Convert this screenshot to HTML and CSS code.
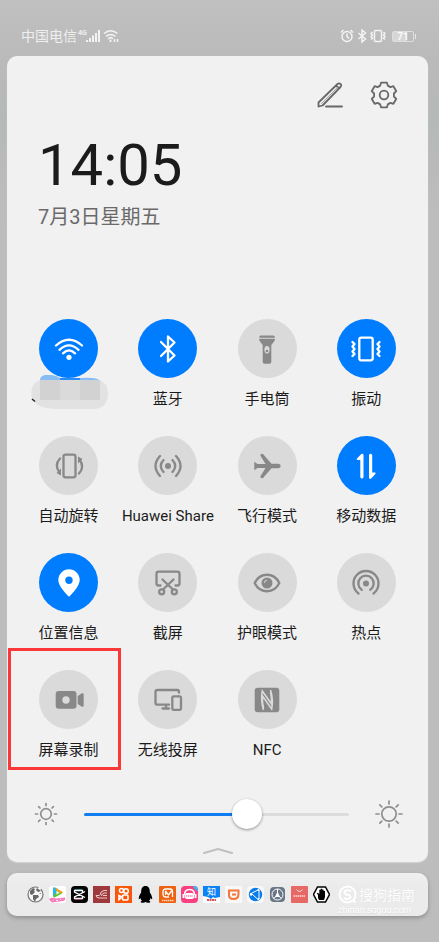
FILE: index.html
```html
<!DOCTYPE html>
<html lang="zh-CN">
<head>
    <meta charset="UTF-8">
    <meta name="viewport" content="width=device-width, initial-scale=1.0">
    <title>控制中心</title>
    <link rel="stylesheet" href="styles.css">
</head>
<body>
    <div class="status-bar">
        <div class="status-left">
            <span class="carrier">中国电信</span>
            <span class="network">4G</span>
            <svg class="signal" width="14" height="14" viewBox="0 0 14 14"><path d="M1 11v2M4 9v4M7 6.500v6.500M10 4v9M13 1v12"/></svg>
            <svg class="status-wifi" width="16" height="14" viewBox="0 0 16 14">
                <path d="M1 4.500Q7.500-1 14.500 4.500M3 7.500Q7.500 3.500 12.500 7.500M5 10Q7.500 7.500 10 9.500"/>
                <path d="M7.500 10.500v2.500M6.500 12h2M11.500 10v3M14.500 10v3"/>
            </svg>
        </div>
        <div class="status-right">
            <svg width="14" height="14" viewBox="0 0 14 14"><circle cx="7" cy="7.500" r="5"/><path d="M7 4.500v3l2 2M1 3.500L3.500 1M13 3.500L10.500 1"/></svg>
            <svg width="10" height="14" viewBox="0 0 10 14"><path d="M1.500 4l7 6L5 13V1l3.500 3-7 6"/></svg>
            <svg width="16" height="14" viewBox="0 0 16 14"><rect x="4.500" y="1.500" width="7" height="11" rx="1"/><path d="M2.500 3l-1.500 1.500 1.500 1.500L1 7.500 2.500 9 1 10.500M13.500 3l1.500 1.500L13.500 6 15 7.500 13.500 9l1.500 1.500"/></svg>
            <span class="battery">71</span>
        </div>
    </div>

    <main class="panel">
        <div class="actions">
            <button class="icon-btn" aria-label="编辑">
                <svg width="28" height="28" viewBox="-14 -14 28 28"><path d="M-11.500 11.500v-4L7.500-11q1.500-1.200 3 0t0 3L-7.500 10.500l-4 1M6-9.500l3.200 3M-4 11.500h16"/><path d="M-8.500 8.500L8.500-8.500" class="thin"/></svg>
            </button>
            <button class="icon-btn" aria-label="设置">
                <svg width="28" height="28" viewBox="-14 -14 28 28"><path d="M-2.900-12.400H2.900L3.800-9.400 6.400-7.900 9.400-8.800 12.300-3.800 9.900-1.500V1.500L12.300 3.800 9.400 8.800 6.400 7.900 3.800 9.400 2.900 12.400H-2.900L-3.800 9.400-6.400 7.900-9.400 8.800-12.300 3.800-9.900 1.500V-1.500L-12.300-3.800-9.400-8.800-6.400-7.900-3.800-9.400z"/><circle r="4.300"/></svg>
            </button>
        </div>

        <div class="clock">
            <h1 class="time">14:05</h1>
            <p class="date">7月3日星期五</p>
        </div>

        <div class="tiles">
            <button class="tile on" aria-label="WLAN">
                <span class="circle">
                    <svg viewBox="-15 -15 30 30" class="line"><path d="M-13-3.500Q0-15 13-3.500M-9.500 .8Q0-8 9.500 .8M-6 4.300Q0-1.500 6 4.300"/><circle class="solid" cy="8.300" r="2.600"/></svg>
                </span>
                <span class="label"></span>
                <svg class="smudge" width="78" height="36" viewBox="0 0 78 36">
                    <path fill="#86bdf4" d="M9 5Q9 1 14 0Q23-1 29 3H50Q64 2 68 5z"/>
                    <path fill="#268cfa" d="M29 3h20v2H29z"/>
                    <path fill="#e2e2e2" d="M9 5H68Q77 8 77 18Q77 34 62 34H24Q4 33 1 23Q-2 9 9 5z"/>
                    <path fill="#d2d2d2" d="M9 5h20v20H9zM49 5h20v20H49z"/>
                    <path fill="#dadada" d="M29 5h20v20H29z"/>
                    <path stroke="#222" stroke-width="1.500" d="M1 24l3 2.500"/>
                </svg>
            </button>
            <button class="tile on">
                <span class="circle">
                    <svg viewBox="-15 -15 30 30" class="line"><path d="M-7-7L6.500 6.500 0 12.500V-12.500L6.500-6.500-7 7"/></svg>
                </span>
                <span class="label">蓝牙</span>
            </button>
            <button class="tile">
                <span class="circle">
                    <svg viewBox="-15 -15 30 30"><path d="M-7.700-11.300v-.7q0-1.500 1.500-1.500H6.300q1.500 0 1.500 1.500v.7zM-7.700-10.300H7.800V-8.500L4.300-4V13q0 1.700-1.700 1.700H-2.600Q-4.300 14.700-4.300 13V-4L-7.700-8.500z"/><ellipse class="hole" cy=".7" rx="2.600" ry="3.700"/><circle cy="2" r="1.300"/></svg>
                </span>
                <span class="label">手电筒</span>
            </button>
            <button class="tile on">
                <span class="circle">
                    <svg viewBox="-15 -15 30 30" class="line"><rect x="-6.700" y="-11.300" width="13.400" height="22.600" rx="2"/><path d="M-13.500-7L-11.500-5-13.500-2.500-11.500 0-13.500 2.500-11.500 5-13.500 7M13.500-7L11.500-5 13.500-2.500 11.500 0 13.500 2.500 11.500 5 13.500 7"/></svg>
                </span>
                <span class="label">振动</span>
            </button>

            <button class="tile">
                <span class="circle">
                    <svg viewBox="-15 -15 30 30" class="line"><rect x="-5.500" y="-11.300" width="12" height="22.600" rx="2"/><path d="M-9-7.500Q-15-1-9.500 6.500M10 7.500Q16 1 10.500-6.500"/><path class="solid" d="M-8 2.500V9.500L-12.500 7zM9-2.500V-9.500L13.500-7z"/></svg>
                </span>
                <span class="label">自动旋转</span>
            </button>
            <button class="tile">
                <span class="circle">
                    <svg viewBox="-15 -15 30 30" class="line"><circle class="solid" r="3"/><path d="M-4.500-6Q-10 0-4.500 6M4.500-6Q10 0 4.500 6M-8-10Q-17 0-8 10M8-10Q17 0 8 10"/></svg>
                </span>
                <span class="label">Huawei Share</span>
            </button>
            <button class="tile">
                <span class="circle">
                    <svg viewBox="-15 -15 30 30"><path d="M-12.700-4.300L-9.500-2H-1.500L-6.700-10.500Q-6.500-13-4-12L4.500-2.200H11.500Q13.700-1.800 13.700 0T11.500 2.200H4.500L-4 12Q-6.500 13-6.700 10.500L-1.500 2H-9.500L-12.700 4.300z"/></svg>
                </span>
                <span class="label">飞行模式</span>
            </button>
            <button class="tile on">
                <span class="circle">
                    <svg viewBox="-15 -15 30 30"><path d="M-5.700 11.300V-6H-8.500Q-10-6.200-9-7.500L-4.700-12Q-2.700-13-2.500-11V11.300Q-4 14-5.700 11.300zM3-11V11.500Q3.200 13.800 5.200 12.500L9.300 8Q10.300 6.700 9 6.500H6.200V-11Q4.500-13.500 3-11z"/></svg>
                </span>
                <span class="label">移动数据</span>
            </button>

            <button class="tile on">
                <span class="circle">
                    <svg viewBox="-15 -15 30 30"><path d="M0 13.700C-3 11-10.700 3-10.700-3A10.700 10.700 0 0 1 10.700-3C10.700 3 3 11 0 13.700z"/><circle class="hole" cy="-2.700" r="3.700"/></svg>
                </span>
                <span class="label">位置信息</span>
            </button>
            <button class="tile">
                <span class="circle">
                    <svg viewBox="-15 -15 30 30" class="line"><path d="M-7.500 2.500h-2q-2 0-2-2V-9.300q0-2 2-2h19q2 0 2 2V.5q0 2-2 2h-2M-5.500-3.500L5 6.500M5.500-3.500L-5 6.500"/><circle cx="-6.300" cy="8.800" r="2.500"/><circle cx="6.300" cy="8.800" r="2.500"/></svg>
                </span>
                <span class="label">截屏</span>
            </button>
            <button class="tile">
                <span class="circle">
                    <svg viewBox="-15 -15 30 30" class="line"><path d="M-12.300 0C-7-11 7-11 12.300 0C7 11-7 11-12.300 0z"/><circle class="solid" r="5.500"/><path class="glint" d="M-2.700-.5Q-2.500-2.700-.3-3"/></svg>
                </span>
                <span class="label">护眼模式</span>
            </button>
            <button class="tile">
                <span class="circle">
                    <svg viewBox="-15 -15 30 30" class="line"><circle class="solid" cy=".5" r="3"/><path d="M-4.300 6.800A7.700 7.700 0 1 1 4.300 6.800M-7.500 10.500A12.500 12.500 0 1 1 7.500 10.500"/></svg>
                </span>
                <span class="label">热点</span>
            </button>

            <button class="tile marked">
                <span class="circle">
                    <svg viewBox="-15 -15 30 30"><rect x="-13.300" y="-9" width="20.800" height="17.700" rx="3"/><circle class="hole" cx="-3" r="3.700"/><path d="M8.700-4L13-6.700Q14.700-7 14.700-5.500V5.500Q14.700 7 13 6.700L8.700 4z"/></svg>
                </span>
                <span class="label">屏幕录制</span>
            </button>
            <button class="tile">
                <span class="circle">
                    <svg viewBox="-15 -15 30 30" class="line"><path d="M1 4.700H-10.500q-2 0-2-2V-8q0-2 2-2H9q2 0 2 2v.7M-5.500 8.500H1M-2 5v3"/><rect x="4.300" y="-3.700" width="8.700" height="13.500" rx="1.500"/></svg>
                </span>
                <span class="label">无线投屏</span>
            </button>
            <button class="tile">
                <span class="circle">
                    <svg viewBox="-15 -15 30 30"><rect x="-12.300" y="-12.300" width="24.600" height="24.600" rx="3"/><path class="nfc" d="M-3.500 10Q-6.500 0-4.700-9L4.500 4Q5-2 3.500-8M3.500-10Q6.500 0 4.700 9L-4.500-4Q-5 2-3.500 8"/></svg>
                </span>
                <span class="label">NFC</span>
            </button>
        </div>

        <div class="brightness">
            <svg width="24" height="24" viewBox="-12 -12 24 24"><circle r="5.300"/><path d="M0-10.500v2M0 8.500v2M-10.500 0h2M8.500 0h2M-7.400-7.400l1.400 1.400M6 6l1.400 1.400M-7.400 7.400l1.400-1.400M6-6l1.400-1.400"/></svg>
            <input class="slider" type="range" min="0" max="100" value="63" aria-label="亮度">
            <svg width="28" height="28" viewBox="-14 -14 28 28"><circle r="7.200"/><path d="M0-13v3M0 10v3M-13 0h3M10 0h3M-9.200-9.200l2 2M7.200 7.200l2 2M-9.200 9.200l2-2M7.200-7.200l2-2"/></svg>
        </div>

        <button class="collapse" aria-label="收起">
            <svg width="30" height="6" viewBox="0 0 30 6"><path d="M1 5L15 1l14 4"/></svg>
        </button>
    </main>

    <footer class="dock">
        <div class="apps">
            <svg viewBox="0 0 17 17"><circle cx="8.500" cy="8.500" r="7.500" fill="#f5f5f5" stroke="#777" stroke-width="1.200" stroke-dasharray="38 3"/><path fill="#666" d="M3 5l3-3 2 1-1 2 1 1-3 3-2-1zM10 2l4 3-3 1-2-2zM6 9l5 0 1 2-3 2-1 3-2-3zM12 7l2 0 0 1z"/></svg>
            <svg viewBox="0 0 17 17"><rect width="17" height="17" rx="3" fill="#fff"/><path fill="#22b8f0" d="M4 2.500Q4 .5 6 1.500L9 3 6 11Q4 11.500 4 9.500z"/><path fill="#ff9b1a" d="M6 1.500L13 5.500Q14.500 6.500 13 7.500L9 8z"/><path fill="#62c62e" d="M13 7.500L6 11.300Q4.500 11.800 4.200 10.500L8 5z"/><path fill="#fff" d="M7.500 5l3 1.800-3 1.700z"/><path fill="#f77dbb" d="M0 13Q3 11 7 12.500L16 11.500Q17 14 14 15L3 16.500Q1 15.500 0 13z"/><path stroke="#fff" stroke-width=".8" d="M4 14.500l1-1M7 14.500h2M11 14l1-1"/></svg>
            <svg viewBox="0 0 17 17"><rect width="17" height="17" rx="4" fill="#050505"/><g fill="none" stroke="#fff" stroke-width="1.300"><path d="M11.500 6.500V4.500h-8V6L14 11.500M11.500 10.500v2h-8V11L14 5.500"/></g><path stroke="#ef4f78" stroke-width=".6" d="M4 13.400h7"/><path stroke="#4bdbe3" stroke-width=".6" d="M4 3.600h7"/></svg>
            <svg viewBox="0 0 17 17"><path fill="#9f383a" d="M0 0h17v17H0z"/><g fill="none" stroke="#f4dcdc" stroke-width=".9"><path d="M14 4.500H11Q7.500 5 7 9M14 7H11Q8.500 7.500 8.500 10M14 9.500H10M14 12H6Q3.500 12 3 9.500M3 9.500h3.500"/></g></svg>
            <svg viewBox="0 0 17 17"><path fill="#fb5509" d="M0 0h17v17H0z"/><g fill="none" stroke="#fff" stroke-width="1.600"><circle cx="6.500" cy="4.500" r="2"/><circle cx="11" cy="5" r="2.300"/><rect x="7.500" y="9" width="5.500" height="5" rx="1"/><path d="M7 11L4 9.500v4z"/></g></svg>
            <svg viewBox="0 0 17 17"><path d="M8.500 0C12 0 13 3 12.800 6.500C14 8 15.500 11 15.200 13Q14.500 13.500 13.500 12Q13.300 14 12 14.700Q14 15.500 13 16.500Q10 17.300 8.500 16Q7 17.300 4 16.500Q3 15.500 5 14.700Q3.700 14 3.500 12Q2.500 13.500 1.800 13C1.500 11 3 8 4.200 6.500C4 3 5 0 8.500 0z"/></svg>
            <svg viewBox="0 0 17 17"><rect width="17" height="17" rx="1" fill="#ed6311"/><path fill="none" stroke="#fff" stroke-width="1.300" d="M10 11H7Q4 11 4 8V6Q4 3 7 3h4q2.500 0 2.500 2.500V11M6.500 5v4M6.500 5l3 4 3-4"/><path stroke="#ffd7bd" stroke-width="1.300" stroke-dasharray="1.500 .5" d="M3 14.500h11.500"/></svg>
            <svg viewBox="0 0 17 17"><rect width="17" height="17" rx="4" fill="#fa3f82"/><path fill="#39b9e8" d="M12 0h1Q17 0 17 4v1Q13 4 12 0z"/><path fill="none" stroke="#fff" stroke-width="1.500" d="M3.500 9Q3.500 3.500 8.500 3.500T13.500 9"/><rect x="4" y="7" width="9" height="6" rx="2" fill="#fff"/><path stroke="#fff" stroke-width="2" d="M2.500 8v4M14.500 8v4"/><path stroke="#fa3f82" stroke-dasharray="1.200 .6" d="M5 10h7"/></svg>
            <svg viewBox="0 0 17 17"><path fill="#fff" d="M0 0h17v17H0z"/><path fill="#0b82f5" d="M0 0h17v11l-5 1-2-1-2 2-3-2-5-1z"/><text class="zhi" x="4" y="9">知</text><path stroke="#d45555" stroke-width="1.800" stroke-dasharray="2 .5" d="M4 14h9"/></svg>
            <svg viewBox="0 0 17 17"><path fill="#f8f8f8" d="M0 0h17v17H0z"/><path fill="none" stroke="#f87538" stroke-width="2" d="M4 4.500h9.500V8q0 5-5 5T4 8zM7 8.500h4"/></svg>
            <svg viewBox="0 0 17 17"><rect width="17" height="17" rx="4" fill="#f8f8f8"/><circle cx="8.500" cy="8.500" r="6.700" fill="#087ceb"/><g fill="none" stroke="#fff"><path d="M3 8L12 3.500M5 8l6 5.500M12 4v9"/></g><circle cx="4" cy="8.500" r="1.200" fill="#fff"/><circle cx="11.500" cy="4" r="1" fill="#fff"/><circle cx="11.500" cy="13" r="1" fill="#fff"/></svg>
            <svg viewBox="0 0 17 17"><rect x="1" y="1" width="15" height="15" rx="4" fill="#6b7687"/><g fill="none" stroke="#fff"><circle cx="8.500" cy="8.500" r="5.500"/><path d="M8.500 3v4M8.500 9l-4 3.500M8.500 9l4 3.500"/></g><path fill="#fff" d="M8.500 5.500l2.500 5.500H6z"/></svg>
            <svg viewBox="0 0 17 17"><rect width="17" height="17" rx="1" fill="#e76965"/><path fill="none" stroke="#fff" stroke-width=".8" d="M5.500 3.500q3 4 6 0"/><path stroke="#fbd9d8" stroke-width="1.600" stroke-dasharray="1.500 .5" d="M2.500 10h12"/></svg>
            <svg viewBox="0 0 17 17"><path fill="#fff" stroke="#050505" stroke-width="1.500" d="M4.500 1h8l4 7.500-4 7.500h-8l-4-7.500z"/><path d="M5 12V9L3.800 7.500l1-.8L6.300 8V4q.7-1 1.300 0V3q.8-1 1.500 0v.7q.8-.8 1.500.2V5q.7-.8 1.400.2V11L11 14H6z"/></svg>
        </div>
        <div class="watermark">
            <div class="brand">
                <svg width="20" height="20" viewBox="0 0 20 20"><circle cx="9.500" cy="9.500" r="8"/><path d="M13 6.500Q11 4.500 8 5.500T8 9.500L11 10Q14 12 11 13.500T6 12.500M15 15l2.500 2.500"/></svg>
                <span>搜狗指南</span>
            </div>
            <span class="site">zhinan.sogou.com</span>
        </div>
    </footer>
</body>
</html>
```
FILE: styles.css
```css
* {
    padding: 0;
    margin: 0;
    box-sizing: border-box;
}

body {
    min-height: 100vh;
    padding: 0 11px 0 7px;
    background: linear-gradient(#c0c0c0 0, #bababa 56px, #b5b9b8 120px, #bdbdbd 220px);
    font-family: Roboto, "Noto Sans CJK SC", sans-serif;
    color: #1b1b1b;
}

button {
    border: 0;
    background: none;
    font: inherit;
    color: inherit;
}

svg {
    display: block;
    flex-shrink: 0;
}

/* status bar */
.status-bar {
    display: flex;
    justify-content: space-between;
    height: 56px;
    padding: 26px 14px 10px 14px;
    color: #efefef;
}

.status-bar svg {
    fill: none;
    stroke: #f3f3f3;
    stroke-width: 1.5;
}

.status-bar .signal {
    stroke-width: 2;
}

.status-left, .status-right {
    display: flex;
    align-items: center;
}

.status-left {
    gap: 1px;
}

.status-left .status-wifi {
    margin-left: 2px;
}

.status-right {
    gap: 3px;
}

.carrier {
    font-size: 14px;
    line-height: 20px;
}

.network {
    align-self: flex-start;
    font-size: 7px;
    font-weight: bold;
    line-height: 14px;
}

.signal {
    margin-left: -2px;
}

.battery {
    position: relative;
    width: 22px;
    height: 11px;
    margin-left: 3px;
    border: 1px solid #dedede;
    border-radius: 2px;
    background: linear-gradient(90deg, #d6d6d6 71%, transparent 71%);
    font-size: 10px;
    font-weight: bold;
    line-height: 9px;
    text-align: center;
    color: #fafafa;
}

.battery::after {
    content: "";
    position: absolute;
    top: 2px;
    right: -3px;
    width: 1px;
    height: 5px;
    background: #e6e6e6;
}

/* panel */
.panel {
    padding: 24px 12px 8px;
    border-radius: 10px;
    background: #f1f1f1;
    box-shadow: 0 1px 1px #d4d4d4;
}

.actions {
    display: flex;
    justify-content: flex-end;
    gap: 26px;
    height: 30px;
    padding-right: 18px;
}

.icon-btn svg {
    fill: none;
    stroke: #686868;
    stroke-width: 1.8;
    stroke-linejoin: round;
    stroke-linecap: round;
}

.icon-btn .thin {
    stroke-width: 1;
    stroke: #a5a5a5;
}

.clock {
    padding-left: 19px;
}

.time {
    margin-top: 25px;
    font-size: 58px;
    font-weight: normal;
    line-height: 60px;
}

.date {
    margin-top: 10px;
    font-size: 20px;
    line-height: 24px;
    color: #6a6a6a;
}

/* switches */
.tiles {
    display: grid;
    grid-template-columns: repeat(4, 1fr);
    row-gap: 27px;
    margin-top: 90px;
}

.tile {
    position: relative;
    display: flex;
    flex-direction: column;
    align-items: center;
    gap: 11px;
}

.circle {
    display: flex;
    justify-content: center;
    align-items: center;
    width: 59px;
    height: 59px;
    border-radius: 50%;
    background: #dadada;
    color: #888888;
}

.on .circle {
    background: #007dff;
    color: #ffffff;
}

.circle svg {
    width: 30px;
    height: 30px;
    fill: currentColor;
}

.circle .line {
    fill: none;
    stroke: currentColor;
    stroke-width: 2.3;
    stroke-linecap: round;
    stroke-linejoin: round;
}

.circle .solid {
    fill: currentColor;
    stroke: none;
}

.circle .hole {
    fill: #dadada;
}

.on .circle .hole {
    fill: #007dff;
}

.circle .glint {
    stroke: #dadada;
    stroke-width: 1;
}

.circle .nfc {
    fill: none;
    stroke: #dadada;
    stroke-width: 1.6;
}

.label {
    height: 20px;
    font-size: 15px;
    line-height: 20px;
    white-space: nowrap;
}

.smudge {
    position: absolute;
    top: 56px;
    left: 12px;
}

.marked::after {
    content: "";
    position: absolute;
    inset: -22px -3px -10px -11px;
    border: 3px solid #fb3838;
}

/* brightness */
.brightness {
    display: flex;
    align-items: center;
    gap: 26px;
    height: 30px;
    margin-top: 39px;
    padding: 0 13px 0 15px;
}

.brightness svg {
    fill: none;
    stroke: #8f8f8f;
    stroke-width: 1.7;
    stroke-linecap: round;
}

.slider {
    flex: 1;
    min-width: 0;
    height: 30px;
    appearance: none;
    background: none;
}

.slider::-webkit-slider-runnable-track {
    height: 3px;
    border-radius: 2px;
    background: linear-gradient(90deg, #107df0 62%, #dcdcdc 62%);
}

.slider::-webkit-slider-thumb {
    appearance: none;
    width: 30px;
    height: 30px;
    margin-top: -14px;
    border-radius: 50%;
    background: #ffffff;
    box-shadow: 0 1px 3px rgba(0, 0, 0, 0.4);
}

.collapse {
    display: block;
    margin: 19px auto 0;
}

.collapse svg {
    fill: none;
    stroke: #c0c0c0;
    stroke-width: 2;
    stroke-linecap: round;
}

/* dock */
.dock {
    display: flex;
    gap: 8px;
    height: 43px;
    margin-top: 11px;
    padding-left: 20px;
    border-radius: 10px;
    background: linear-gradient(#f0f0f0, #ebebeb 30%);
    box-shadow: 0 2px 4px rgba(0, 0, 0, 0.25);
}

.apps {
    display: flex;
    align-items: center;
    gap: 5px;
}

.apps svg {
    width: 17px;
    height: 17px;
}

.zhi {
    font-size: 9px;
    fill: #ffffff;
}

.watermark {
    display: flex;
    flex-direction: column;
    justify-content: flex-end;
    color: #ffffff;
}

.brand {
    display: flex;
    align-items: center;
    gap: 1px;
    font-size: 14px;
    line-height: 20px;
    text-shadow: 0 0 1px #d8d8d8;
}

.brand svg {
    fill: none;
    stroke: #ffffff;
    stroke-width: 2;
}

.site {
    font-family: "Liberation Sans", Arial, sans-serif;
    font-size: 9px;
    line-height: 11px;
    text-shadow: 0 1px 1px #d8d8d8;
}
```
